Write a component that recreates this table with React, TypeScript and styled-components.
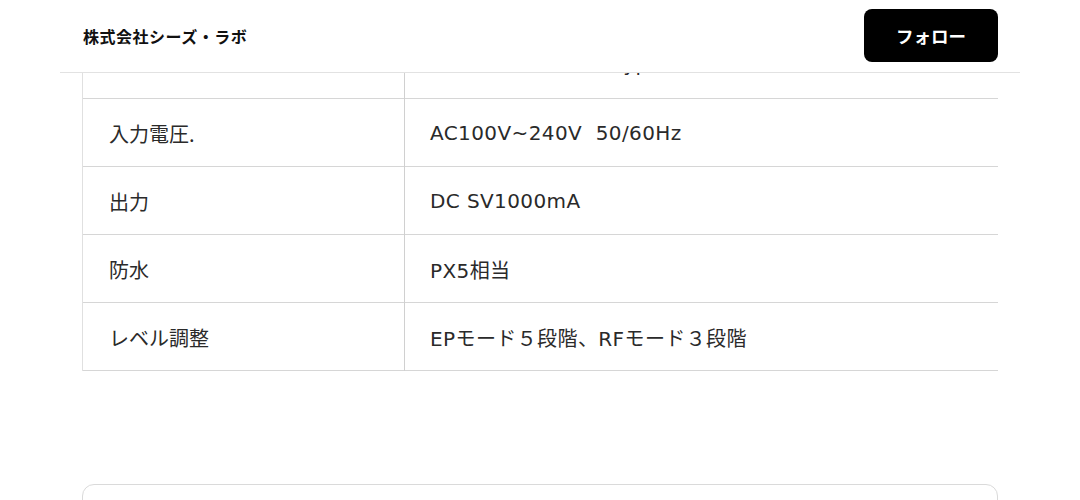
import styled, { createGlobalStyle } from 'styled-components';

interface SpecRow {
  label: string;
  value: string;
}

const specs: SpecRow[] = [
  { label: '充電方式', value: 'USBケーブル充電（Type-C）' },
  { label: '入力電圧.', value: 'AC100V~240V\u00a0\u00a050/60Hz' },
  { label: '出力', value: 'DC SV1000mA' },
  { label: '防水', value: 'PX5相当' },
  { label: 'レベル調整', value: 'EPモード５段階、RFモード３段階' },
];

const GlobalStyle = createGlobalStyle`
  html, body {
    margin: 0;
    padding: 0;
    background: #ffffff;
  }

  body {
    font-family: 'DejaVu Sans', 'Noto Sans CJK JP', sans-serif;
    color: #222222;
  }
`;

const Page = styled.div`
  width: 960px;
  height: 500px;
  margin: 0 auto;
  display: flex;
  flex-direction: column;
  overflow: hidden;
`;

const Header = styled.header`
  display: flex;
  align-items: center;
  justify-content: space-between;
  height: 72px;
  padding: 0 22px 0 23px;
  border-bottom: 1px solid #e2e2e2;
  flex-shrink: 0;
`;

const Company = styled.h1`
  margin: 0;
  font-family: 'Noto Sans CJK JP', sans-serif;
  font-size: 16px;
  font-weight: 700;
  color: #111111;
  letter-spacing: 0.5px;
`;

const FollowButton = styled.button`
  width: 134px;
  height: 53px;
  margin-top: -1px;
  border: none;
  border-radius: 8px;
  background: #000000;
  color: #ffffff;
  font-family: 'Noto Sans CJK JP', sans-serif;
  font-size: 17.5px;
  font-weight: 700;
  cursor: pointer;
`;

const Content = styled.main`
  flex: 1;
  overflow: hidden;
  padding: 0 22px;
  display: flex;
  flex-direction: column;
  gap: 113px;
`;

const SpecTable = styled.table`
  width: 100%;
  margin-top: -43px;
  border-collapse: collapse;
  table-layout: fixed;
`;

const Row = styled.tr<{ $partial?: boolean }>`
  height: 68px;
  border-top: 1px solid #d6d6d6;
  border-bottom: 1px solid #d6d6d6;

  & > td {
    padding-bottom: ${(p) => (p.$partial ? '5px' : '0')};
  }
`;

const LabelCell = styled.td`
  width: 322px;
  box-sizing: border-box;
  padding-left: 26px;
  border-left: 1px solid #e0e0e0;
  border-right: 1px solid #d0d0d0;
  font-family: 'Noto Sans CJK JP', sans-serif;
  font-size: 20px;
  color: #2a2a2a;
  vertical-align: middle;
`;

const ValueCell = styled.td`
  padding-left: 25px;
  font-size: 20px;
  letter-spacing: 0.4px;
  color: #2a2a2a;
  vertical-align: middle;
  white-space: nowrap;
`;

const Card = styled.section`
  height: 80px;
  flex-shrink: 0;
  border: 1px solid #dadada;
  border-radius: 12px;
`;

export default function App() {
  return (
    <>
      <GlobalStyle />
      <Page>
        <Header>
          <Company>株式会社シーズ・ラボ</Company>
          <FollowButton>フォロー</FollowButton>
        </Header>
        <Content>
          <SpecTable>
            <tbody>
              {specs.map((row, i) => (
                <Row key={row.label} $partial={i === 0}>
                  <LabelCell>{row.label}</LabelCell>
                  <ValueCell>{row.value}</ValueCell>
                </Row>
              ))}
            </tbody>
          </SpecTable>
          <Card />
        </Content>
      </Page>
    </>
  );
}
